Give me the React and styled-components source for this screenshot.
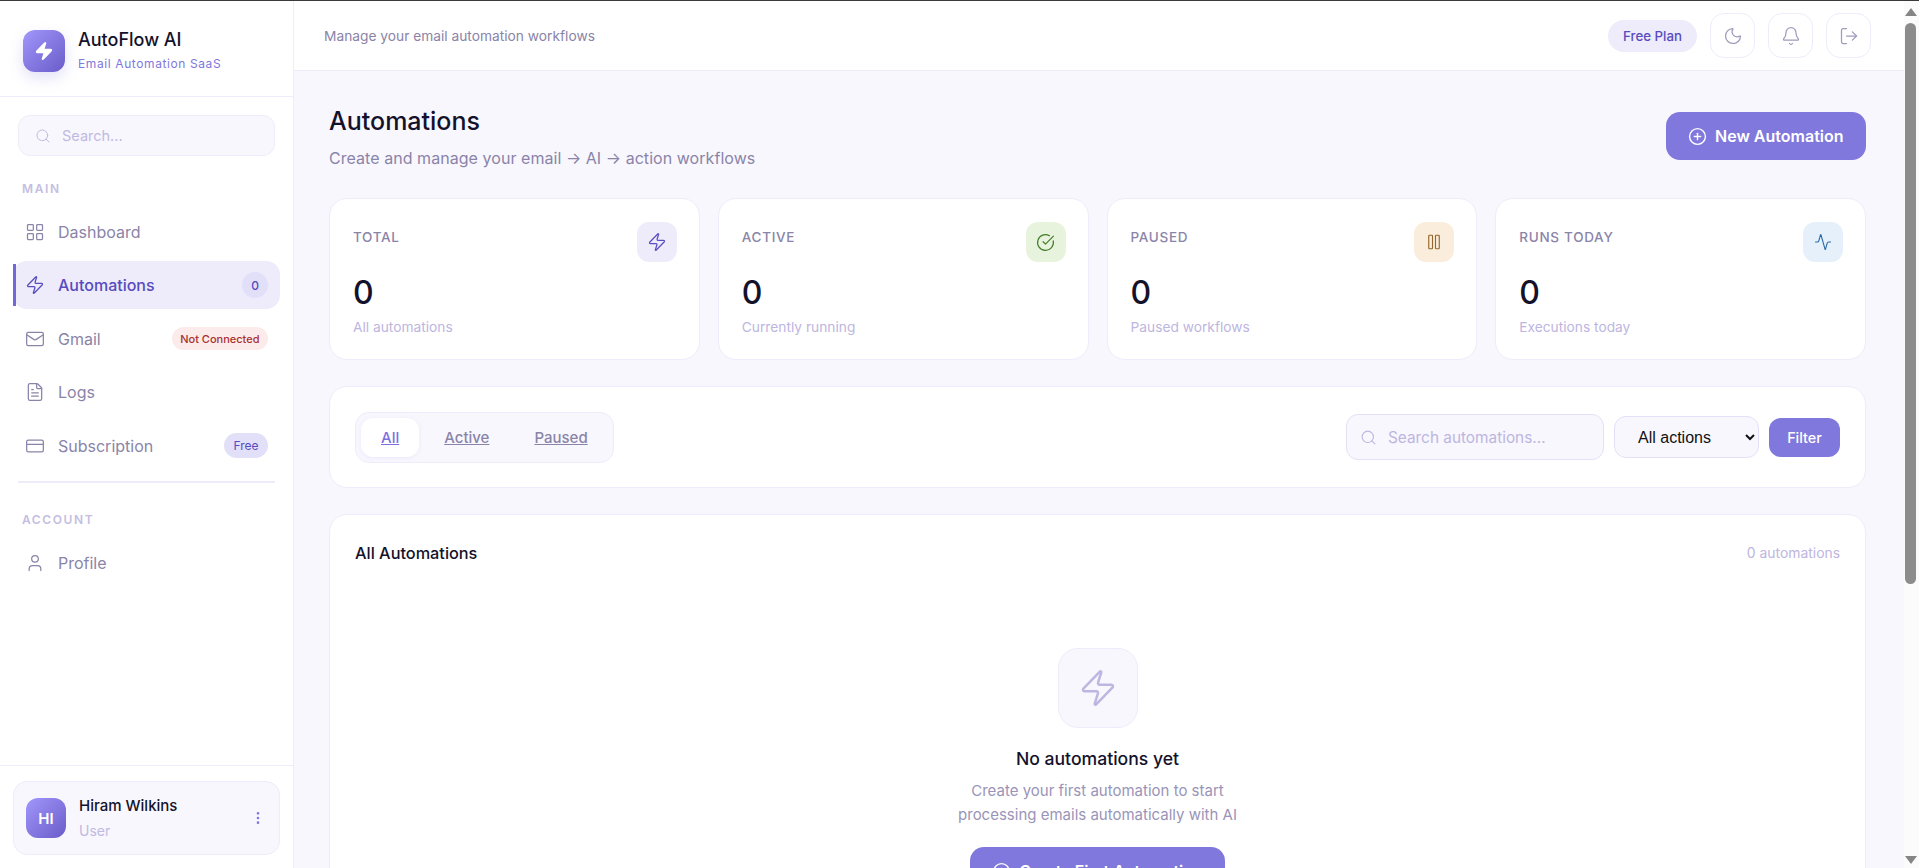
import React from 'react';
import styled, { createGlobalStyle } from 'styled-components';
import {
  Activity, Bell, CircleCheckBig, CirclePlus, CreditCard, EllipsisVertical, FileText,
  LayoutGrid, LogOut, Mail, Moon, Pause, Search, User, Zap,
} from 'lucide-react';

const GlobalStyle = createGlobalStyle`
  html, body { margin: 0; height: 100%; overflow: hidden; }
  body { font-family: Inter, "Liberation Sans", sans-serif; color: #14122b; background: #fff; }
  #root { height: 100%; }
  * { box-sizing: border-box; }
`;

const Page = styled.div`
  height: 100vh;
  display: flex;
  flex-direction: column;
  border-top: 1px solid #3a3a3a;
`;

const Shell = styled.div`
  flex: 1;
  min-height: 0;
  display: flex;
`;

const Sidebar = styled.aside`
  width: 294px;
  flex-shrink: 0;
  display: flex;
  flex-direction: column;
  background: #fff;
  border-right: 1px solid #eeecfa;
`;

const Brand = styled.div`
  height: 96px;
  padding: 5px 23px 0;
  display: flex;
  align-items: center;
  gap: 13px;
  border-bottom: 1px solid #eeecfa;
`;

const LogoMark = styled.div`
  width: 42px;
  height: 42px;
  border-radius: 12px;
  display: flex;
  align-items: center;
  justify-content: center;
  color: #fff;
  background: linear-gradient(135deg, #a197fb, #6a5cc9);
  box-shadow: 0 6px 14px rgba(128, 120, 220, 0.22);
`;

const BrandName = styled.div`
  font-size: 18px;
  font-weight: 500;
  line-height: 24px;
`;

const BrandSub = styled.div`
  font-size: 12px;
  letter-spacing: 0.6px;
  line-height: 20px;
  margin-top: 2px;
  color: #8078dc;
`;

const SideSearch = styled.label`
  margin: 18px 18px 0;
  height: 41px;
  padding: 0 16px;
  display: flex;
  align-items: center;
  gap: 11px;
  border-radius: 12px;
  background: #f8f7fe;
  border: 1px solid #eeecfa;
  color: #c0bae0;
  font-size: 14.5px;
`;

const SectionLabel = styled.div`
  margin: ${p => p.$top}px 22px 0;
  font-size: 12px;
  line-height: 14px;
  font-weight: 600;
  letter-spacing: 1.6px;
  color: #c4bee2;
`;

const NavList = styled.nav`
  margin-top: ${p => p.$top}px;
  padding: 0 13px;
  display: flex;
  flex-direction: column;
  gap: 5.4px;
`;

const NavItem = styled.a`
  position: relative;
  height: 48px;
  padding: 0 12px;
  display: flex;
  align-items: center;
  gap: 13px;
  border-radius: 14px;
  font-size: 16px;
  font-weight: ${p => (p.$active ? 500 : 400)};
  color: ${p => (p.$active ? '#574bbd' : '#8a84a8')};
  background: ${p => (p.$active ? '#eeecfb' : 'transparent')};

  ${p => p.$active && `
    &::before {
      content: '';
      position: absolute;
      left: 0;
      top: 3px;
      bottom: 3px;
      width: 3px;
      background: #7468d8;
    }
  `}
`;

const NavText = styled.span`
  flex: 1;
`;

const CountBadge = styled.span`
  width: 26px;
  height: 26px;
  border-radius: 50%;
  display: flex;
  align-items: center;
  justify-content: center;
  font-size: 12px;
  font-weight: 500;
  color: #574bbd;
  background: #e2dff8;
`;

const Tag = styled.span`
  padding: 0 ${p => (p.$tone === 'red' ? 8.5 : 9.5)}px;
  height: ${p => (p.$tone === 'red' ? 23 : 25)}px;
  border-radius: 13px;
  display: flex;
  align-items: center;
  font-size: ${p => (p.$tone === 'red' ? 11 : 12)}px;
  font-weight: ${p => (p.$tone === 'red' ? 500 : 400)};
  color: ${p => (p.$tone === 'red' ? '#a8302f' : '#574bbd')};
  background: ${p => (p.$tone === 'red' ? '#fbeceb' : '#e2dff8')};
`;

const Divider = styled.div`
  margin: 11px 18px 0;
  height: 2px;
  background: #eeecfb;
`;

const SideFoot = styled.div`
  margin-top: auto;
  padding: 15px 13px 13px;
  border-top: 1px solid #eeecfa;
`;

const UserCard = styled.div`
  height: 74px;
  padding: 0 13px 0 12px;
  display: flex;
  align-items: center;
  gap: 13px;
  border-radius: 14px;
  background: #f8f7fe;
  border: 1px solid #eeecfa;
  color: #8078dc;
`;

const Avatar = styled.div`
  width: 40px;
  height: 40px;
  border-radius: 12px;
  display: flex;
  align-items: center;
  justify-content: center;
  color: #fff;
  font-size: 15px;
  font-weight: 600;
  background: linear-gradient(135deg, #a197fb, #6a5cc9);
`;

const UserInfo = styled.div`
  flex: 1;
`;

const UserName = styled.div`
  font-size: 15px;
  font-weight: 500;
  line-height: 20px;
  color: #14122b;
`;

const UserRole = styled.div`
  font-size: 14px;
  line-height: 20px;
  margin-top: 5px;
  color: #c0bae0;
`;

const Scroller = styled.div`
  flex: 1;
  min-width: 0;
  overflow-y: auto;
  scrollbar-width: none;
  background: #f8f7fe;
`;

// the browser's own bar, as it stands in the picture
const ScrollRail = styled.div`
  width: 15px;
  flex-shrink: 0;
  padding: 7px 3px 4px 1px;
  display: flex;
  flex-direction: column;
  align-items: center;
  background: #fbfbfc;
`;

const RailArrow = styled.div`
  width: 0;
  height: 0;
  border-left: 6px solid transparent;
  border-right: 6px solid transparent;
  ${p => (p.$down
    ? 'margin-top: auto; border-top: 8px solid #858585;'
    : 'margin-bottom: 7px; border-bottom: 8px solid #858585;')}
`;

const RailThumb = styled.div`
  width: 100%;
  height: 561px;
  border-radius: 6px;
  background: #8c8c8c;
`;

const TopBar = styled.header`
  height: 70px;
  padding: 0 33px 0 30px;
  display: flex;
  align-items: center;
  gap: 13px;
  background: #fff;
  border-bottom: 1px solid #eeecfa;
`;

const TopText = styled.div`
  flex: 1;
  font-size: 13.76px;
  color: #8a84a8;
`;

const PlanPill = styled.div`
  height: 32px;
  padding: 0 15px;
  border-radius: 16px;
  display: flex;
  align-items: center;
  font-size: 13.3px;
  font-weight: 500;
  color: #574bbd;
  background: #eeecfb;
`;

const IconButton = styled.button`
  width: 45px;
  height: 45px;
  padding: 0;
  border-radius: 14px;
  display: flex;
  align-items: center;
  justify-content: center;
  color: #a09bba;
  background: #fff;
  border: 1px solid #eeecfa;
`;

const Content = styled.main`
  padding: 35px 38px 60px 35px;
`;

const HeadRow = styled.div`
  display: flex;
  justify-content: space-between;
  align-items: flex-start;
`;

const Title = styled.h1`
  margin: 0;
  font-size: 25px;
  line-height: 30px;
  font-weight: 500;
`;

const Subtitle = styled.p`
  margin: 10px 0 0;
  font-size: 16px;
  line-height: 24px;
  letter-spacing: 0.05px;
  color: #8a84a8;
`;

const PrimaryButton = styled.button`
  height: 48px;
  margin-top: ${p => p.$top || 0}px;
  padding: 0 ${p => (p.$wide ? 22 : 22.5)}px;
  display: flex;
  align-items: center;
  justify-content: center;
  gap: 8px;
  border: none;
  border-radius: 14px;
  color: #fff;
  background: #8078dc;
  font-family: inherit;
  font-size: 16px;
  font-weight: 600;
`;

const Stats = styled.section`
  margin-top: 28px;
  display: grid;
  grid-template-columns: repeat(4, 1fr);
  gap: 18px;
`;

const Card = styled.div`
  background: #fff;
  border: 1px solid #eeecfa;
  border-radius: 18px;
`;

const StatCard = styled(Card)`
  height: 162px;
  padding: 23px 22px 0 23px;
`;

const StatTop = styled.div`
  display: flex;
  justify-content: space-between;
  align-items: flex-start;
`;

const StatLabel = styled.div`
  margin-top: 6px;
  font-size: 13.5px;
  line-height: 18px;
  font-weight: 500;
  letter-spacing: 0.7px;
  color: #8a84a8;
`;

const StatIcon = styled.div`
  width: 40px;
  height: 40px;
  border-radius: 12px;
  display: flex;
  align-items: center;
  justify-content: center;
  color: ${p => p.$fg};
  background: ${p => p.$bg};
`;

const StatValue = styled.div`
  margin-top: 11px;
  font-size: 32px;
  line-height: 40px;
  font-weight: 500;
`;

const StatNote = styled.div`
  margin-top: 4px;
  font-size: 13.76px;
  line-height: 20px;
  color: #bdb6e0;
`;

const FilterCard = styled(Card)`
  margin-top: 26px;
  height: 102px;
  padding: 0 25px;
  display: flex;
  align-items: center;
  gap: 10px;
`;

const Tabs = styled.div`
  margin-right: auto;
  height: 51px;
  padding: 5px;
  display: flex;
  gap: 5px;
  border-radius: 14px;
  background: #f8f7fe;
  border: 1px solid #eeecfa;
`;

const Tab = styled.a`
  height: 39px;
  padding: 0 20px;
  display: flex;
  align-items: center;
  border-radius: 12px;
  font-size: 15px;
  font-weight: 500;
  text-decoration: underline;
  color: ${p => (p.$active ? '#7d6fe0' : '#8a84a8')};
  background: ${p => (p.$active ? '#fff' : 'transparent')};
  box-shadow: ${p => (p.$active ? '0 1px 4px rgba(128,120,220,.12)' : 'none')};
`;

const SearchBox = styled.label`
  width: 258px;
  height: 46px;
  padding: 0 13px;
  display: flex;
  align-items: center;
  gap: 11px;
  border-radius: 12px;
  background: #f8f7fe;
  border: 1px solid #e4e0f8;
  color: #bdb6e0;
  font-size: 15.36px;
`;

const ActionSelect = styled.select`
  width: 145px;
  height: 42px;
  padding: 0 0 0 19px;
  border-radius: 12px;
  background: #f8f7fe;
  border: 1px solid #e4e0f8;
  color: #111;
  font-family: "Liberation Sans", sans-serif;
  font-size: 16px;
`;

const FilterButton = styled.button`
  width: 71px;
  height: 39px;
  border: none;
  border-radius: 12px;
  color: #fff;
  background: #8078dc;
  font-family: inherit;
  font-size: 14.4px;
  font-weight: 500;
`;

const ListCard = styled(Card)`
  margin-top: 26px;
  padding: 27px 25px 0;
  height: 745px;
`;

const ListHead = styled.div`
  display: flex;
  justify-content: space-between;
  align-items: center;
  height: 22px;
`;

const ListTitle = styled.div`
  font-size: 16.3px;
  font-weight: 500;
`;

const ListCount = styled.div`
  font-size: 13.9px;
  color: #bdb6e0;
`;

const Empty = styled.div`
  margin-top: 84px;
  display: flex;
  flex-direction: column;
  align-items: center;
`;

const EmptyIcon = styled.div`
  width: 80px;
  height: 80px;
  border-radius: 20px;
  display: flex;
  align-items: center;
  justify-content: center;
  color: #bdb6e0;
  background: #f8f7fe;
  border: 1px solid #eeecfa;
`;

const EmptyTitle = styled.div`
  margin-top: 19px;
  font-size: 17.6px;
  line-height: 24px;
  font-weight: 500;
`;

const EmptyText = styled.p`
  margin: 8px 0 20px;
  font-size: 15px;
  line-height: 24px;
  text-align: center;
  color: #9a94b8;
`;

const stats = [
  { label: 'TOTAL', note: 'All automations', Icon: Zap, size: 20, fg: '#5a4fc0', bg: '#eeecfb' },
  { label: 'ACTIVE', note: 'Currently running', Icon: CircleCheckBig, size: 19, fg: '#3f7d2a', bg: '#e8f3dd' },
  { label: 'PAUSED', note: 'Paused workflows', Icon: Pause, size: 18, fg: '#96652a', bg: '#faeddb' },
  { label: 'RUNS TODAY', note: 'Executions today', Icon: Activity, size: 18, fg: '#2a6aa8', bg: '#e5f0fa' },
];

const App = () => (
  <Page>
    <GlobalStyle />
    <Shell>
      <Sidebar>
        <Brand>
          <LogoMark><Zap size={20} fill="#fff" strokeWidth={1.5} /></LogoMark>
          <div>
            <BrandName>AutoFlow AI</BrandName>
            <BrandSub>Email Automation SaaS</BrandSub>
          </div>
        </Brand>
        <SideSearch><Search size={16} strokeWidth={1.5} />Search...</SideSearch>
        <SectionLabel $top={26}>MAIN</SectionLabel>
        <NavList $top={12}>
          <NavItem><LayoutGrid size={20} strokeWidth={1.5} /><NavText>Dashboard</NavText></NavItem>
          <NavItem $active><Zap size={20} strokeWidth={1.5} /><NavText>Automations</NavText><CountBadge>0</CountBadge></NavItem>
          <NavItem><Mail size={20} strokeWidth={1.5} /><NavText>Gmail</NavText><Tag $tone="red">Not Connected</Tag></NavItem>
          <NavItem><FileText size={20} strokeWidth={1.5} /><NavText>Logs</NavText></NavItem>
          <NavItem><CreditCard size={20} strokeWidth={1.5} /><NavText>Subscription</NavText><Tag>Free</Tag></NavItem>
        </NavList>
        <Divider />
        <SectionLabel $top={30}>ACCOUNT</SectionLabel>
        <NavList $top={12}>
          <NavItem><User size={20} strokeWidth={1.5} /><NavText>Profile</NavText></NavItem>
        </NavList>
        <SideFoot>
          <UserCard>
            <Avatar>HI</Avatar>
            <UserInfo>
              <UserName>Hiram Wilkins</UserName>
              <UserRole>User</UserRole>
            </UserInfo>
            <EllipsisVertical size={16} />
          </UserCard>
        </SideFoot>
      </Sidebar>
      <Scroller>
        <TopBar>
          <TopText>Manage your email automation workflows</TopText>
          <PlanPill>Free Plan</PlanPill>
          <IconButton><Moon size={20} strokeWidth={1.5} /></IconButton>
          <IconButton><Bell size={20} strokeWidth={1.5} /></IconButton>
          <IconButton><LogOut size={20} strokeWidth={1.5} /></IconButton>
        </TopBar>
        <Content>
          <HeadRow>
            <div>
              <Title>Automations</Title>
              <Subtitle>Create and manage your email → AI → action workflows</Subtitle>
            </div>
            <PrimaryButton $top={6}><CirclePlus size={19} strokeWidth={1.75} />New Automation</PrimaryButton>
          </HeadRow>
          <Stats>
            {stats.map(({ label, note, Icon, size, fg, bg }) => (
              <StatCard key={label}>
                <StatTop>
                  <StatLabel>{label}</StatLabel>
                  <StatIcon $fg={fg} $bg={bg}><Icon size={size} strokeWidth={1.5} /></StatIcon>
                </StatTop>
                <StatValue>0</StatValue>
                <StatNote>{note}</StatNote>
              </StatCard>
            ))}
          </Stats>
          <FilterCard>
            <Tabs>
              <Tab $active>All</Tab>
              <Tab>Active</Tab>
              <Tab>Paused</Tab>
            </Tabs>
            <SearchBox><Search size={17} strokeWidth={1.5} />Search automations...</SearchBox>
            <ActionSelect defaultValue="all">
              <option value="all">All actions</option>
            </ActionSelect>
            <FilterButton>Filter</FilterButton>
          </FilterCard>
          <ListCard>
            <ListHead>
              <ListTitle>All Automations</ListTitle>
              <ListCount>0 automations</ListCount>
            </ListHead>
            <Empty>
              <EmptyIcon><Zap size={40} strokeWidth={1.5} /></EmptyIcon>
              <EmptyTitle>No automations yet</EmptyTitle>
              <EmptyText>Create your first automation to start<br />processing emails automatically with AI</EmptyText>
              <PrimaryButton $wide><CirclePlus size={19} strokeWidth={1.75} />Create First Automation</PrimaryButton>
            </Empty>
          </ListCard>
        </Content>
      </Scroller>
      <ScrollRail aria-hidden="true">
        <RailArrow />
        <RailThumb />
        <RailArrow $down />
      </ScrollRail>
    </Shell>
  </Page>
);

export default App;
